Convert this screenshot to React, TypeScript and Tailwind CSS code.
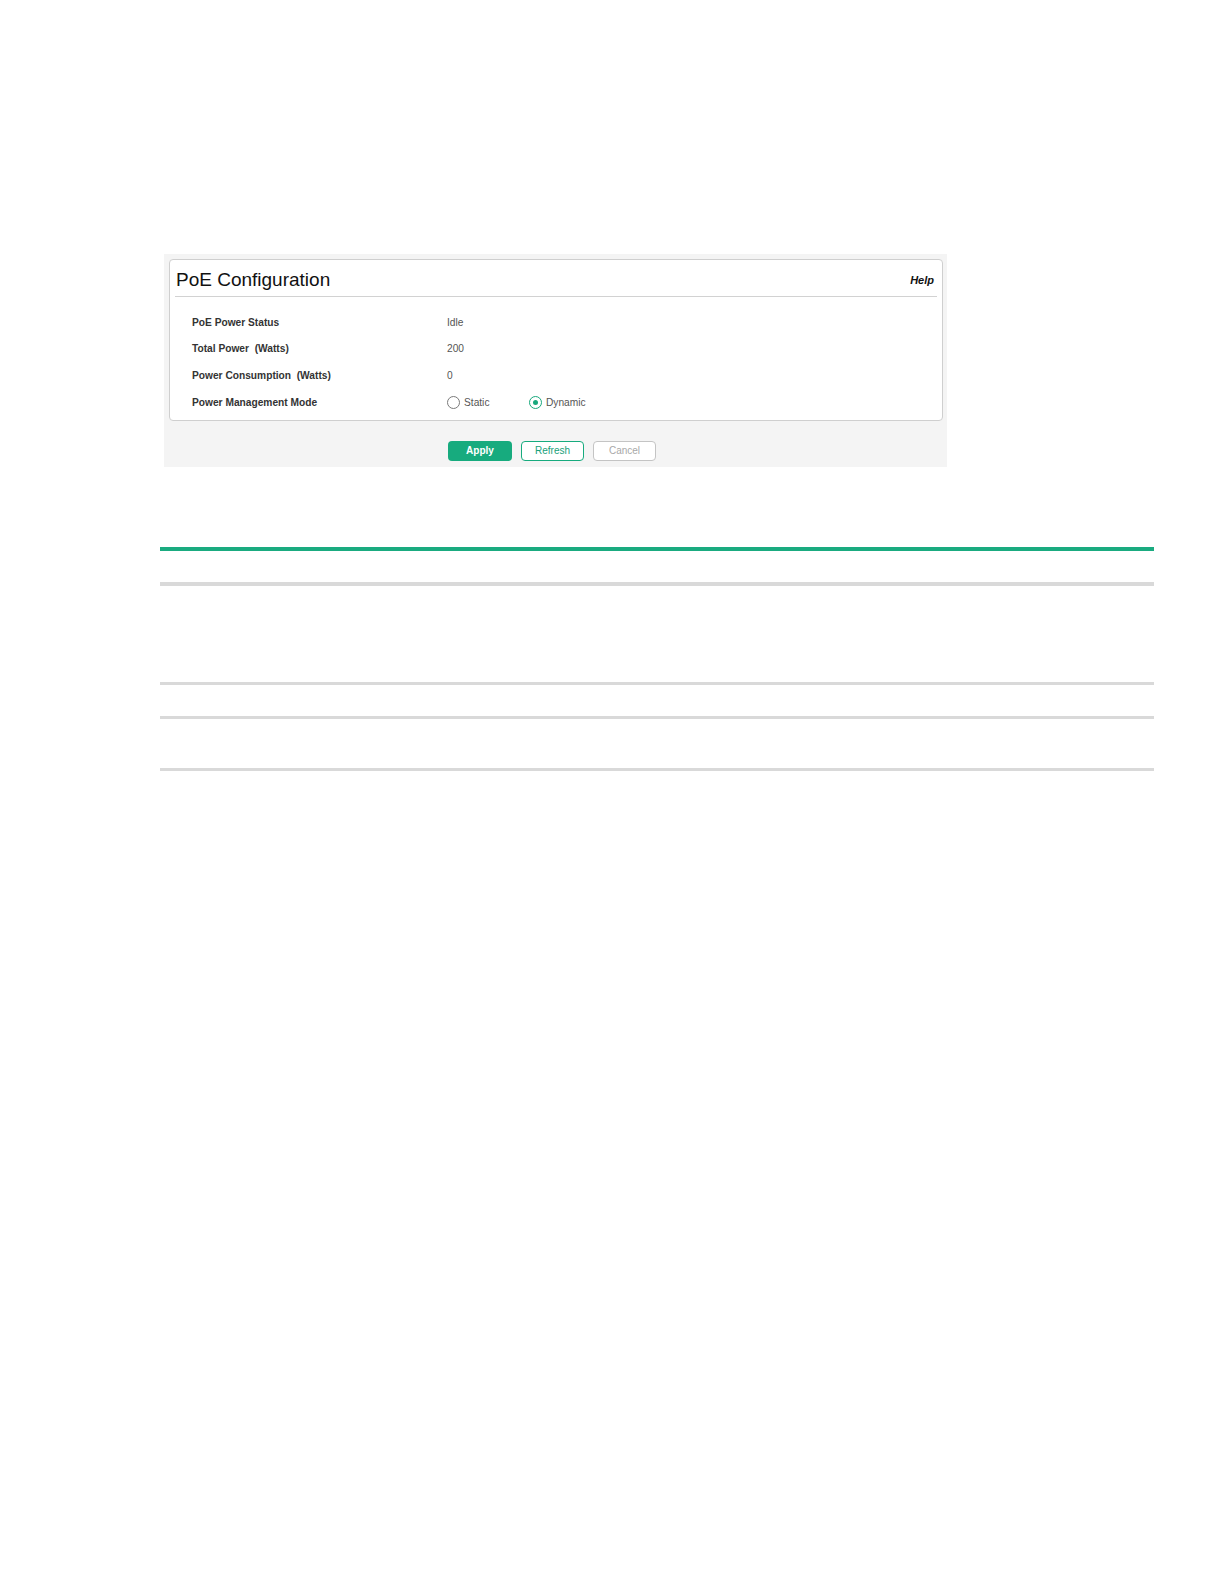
import React from 'react';

const rows = [
  { label: 'PoE Power Status', value: 'Idle' },
  { label: 'Total Power\u00a0 (Watts)', value: '200' },
  { label: 'Power Consumption\u00a0 (Watts)', value: '0' },
];

const Radio = ({ checked, label }: { checked?: boolean; label: string }) => (
  <label className="flex items-center gap-[4px]">
    {checked ? (
      <span className="flex h-[13px] w-[13px] items-center justify-center rounded-full border-[1.5px] border-[#17a87c]">
        <span className="h-[5px] w-[5px] rounded-full bg-[#17a87c]" />
      </span>
    ) : (
      <span className="h-[13px] w-[13px] rounded-full border border-[#7a7a7a] bg-white" />
    )}
    <span className="text-[10.2px] text-[#555]">{label}</span>
  </label>
);

const PoeConfiguration = () => (
  <div className="ml-[164px] w-[783px] bg-[#f4f4f4] pl-[5px] pt-[5px] pb-[6px]">
    <div className="w-[774px] rounded-[4px] border border-[#cfcfcf] bg-white pb-[4px]">
      <div className="mx-[5px] flex h-[37px] items-center justify-between border-b border-[#d2d2d2] pl-[1px] pr-[3px] pt-[4px]">
        <span className="text-[19px] text-[#111]">PoE Configuration</span>
        <span className="text-[11px] font-bold italic text-[#111]">Help</span>
      </div>
      <div className="pt-[12px]">
        {rows.map((row) => (
          <div key={row.label} className="flex h-[26.67px] items-center pl-[22px]">
            <div className="w-[255px] text-[10.2px] font-bold text-[#333]">{row.label}</div>
            <div className="text-[10.2px] text-[#555]">{row.value}</div>
          </div>
        ))}
        <div className="flex h-[26.67px] items-center pl-[22px] pt-[1px]">
          <div className="w-[255px] text-[10.2px] font-bold text-[#333]">Power Management Mode</div>
          <div className="flex items-center">
            <div className="w-[82px]">
              <Radio label="Static" />
            </div>
            <Radio checked label="Dynamic" />
          </div>
        </div>
      </div>
    </div>
    <div className="mt-[20px] flex gap-[9px] pl-[279px]">
      <button className="h-[20px] w-[64px] rounded-[4px] bg-[#17ab7e] text-[10px] font-bold text-white">Apply</button>
      <button className="h-[20px] w-[63px] rounded-[4px] border-[1.5px] border-[#17ab7e] bg-white text-[10px] text-[#17a07a]">Refresh</button>
      <button className="h-[20px] w-[63px] rounded-[4px] border-[1.5px] border-[#c4c4c4] bg-white text-[10px] text-[#a8a8a8]">Cancel</button>
    </div>
  </div>
);

const EmptyTable = () => (
  <div className="ml-[160px] mt-[80px] w-[994px]">
    <div className="h-[35px] border-t-[4px] border-[#1aab80]" />
    <div className="h-[100px] border-t-[4px] border-[#d9d9d9]" />
    <div className="h-[34px] border-t-[3px] border-[#d9d9d9]" />
    <div className="h-[52px] border-t-[3px] border-[#d9d9d9]" />
    <div className="border-t-[3px] border-[#d9d9d9]" />
  </div>
);

export default function App() {
  return (
    <div className="min-h-[1584px] bg-white pt-[254px] font-['Liberation_Sans',Arial,sans-serif]">
      <PoeConfiguration />
      <EmptyTable />
    </div>
  );
}
